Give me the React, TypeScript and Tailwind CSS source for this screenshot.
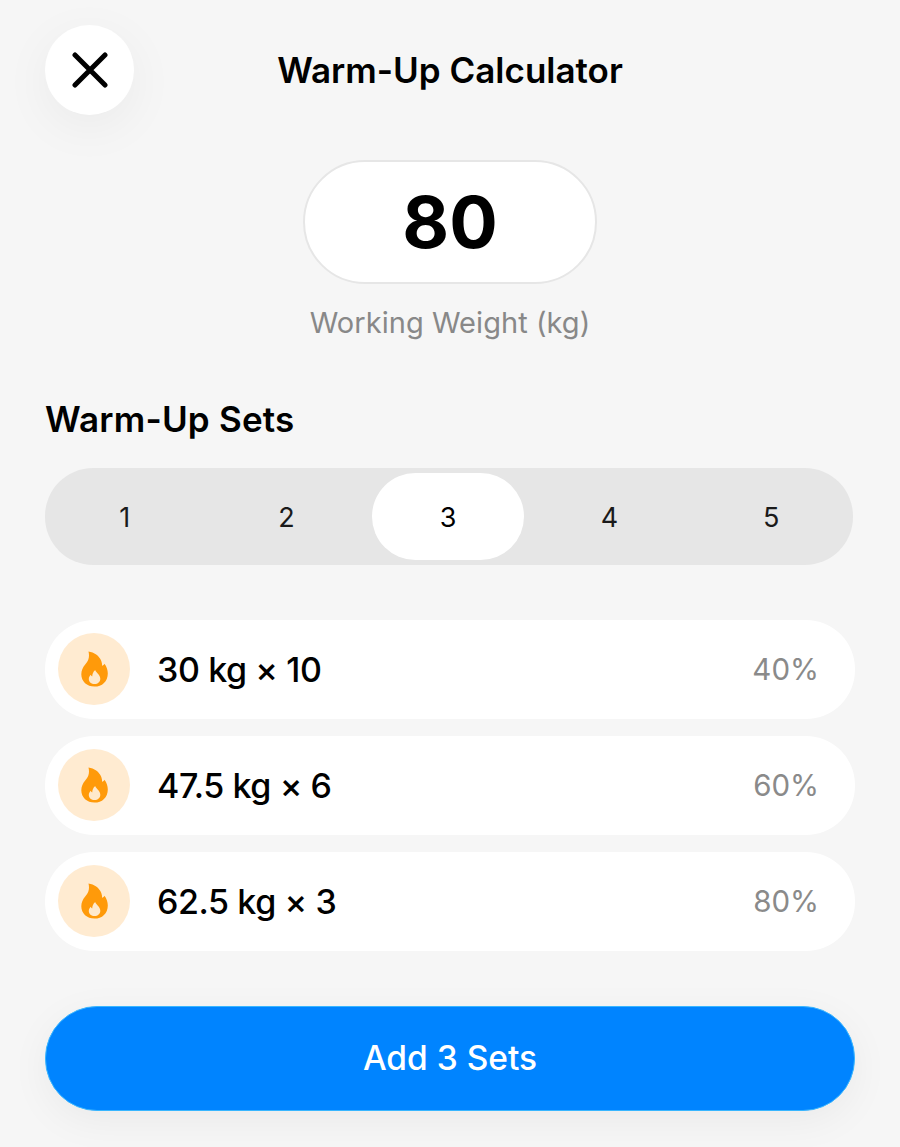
const sets = [
  { label: "30 kg × 10", pct: "40%" },
  { label: "47.5 kg × 6", pct: "60%" },
  { label: "62.5 kg × 3", pct: "80%" },
];

function Flame() {
  return (
    <svg width="27" height="36" viewBox="0 0 27 36">
      <path
        fill="#ff9a0a"
        d="M7.500 0.500C13 1.200 18.300 4.700 20.300 10c.6 1.600.9 3.200.8 4.700 1-.3 1.900-1 2.400-2 2.200 2.900 3.300 6.300 3.300 9.700 0 8-5.800 13.200-13.300 13.200S.3 30.600.3 23.300c0-3.900 1.700-7 3.900-9.700C6.900 10.300 9 6.700 7.500 0.500Z"
      />
      <path
        fill="#ffe9cc"
        d="M14.200 19c.5 2.500 5.100 4.500 5.100 8.700 0 3.200-2.500 5.300-5.700 5.300s-5.800-2-5.800-5c0-1.800.8-3.200 1.900-4.300.3.800.8 1.400 1.500 1.700.2-2.500 1-4.700 3-6.400Z"
      />
    </svg>
  );
}

export default function App() {
  return (
    <div className="relative h-[1147px] w-[900px] overflow-hidden bg-[#f6f6f6] px-[45px] pt-[25px] font-['Inter',sans-serif] text-black">
      <div className="relative flex h-[89px] items-center justify-center">
        <button className="absolute left-0 top-0 flex h-[90px] w-[89px] items-center justify-center rounded-full bg-white shadow-[0_12px_50px_rgba(0,0,0,0.05)]">
          <svg width="36" height="36" viewBox="0 0 36 36" fill="none" stroke="#000" strokeWidth="5" strokeLinecap="round">
            <path d="M3 3 33 33M33 3 3 33" />
          </svg>
        </button>
        <h1 className="pt-[2px] text-[35px] font-semibold leading-[41px] tracking-[0px]">Warm-Up Calculator</h1>
      </div>

      <div className="mt-[46px] flex flex-col items-center">
        <div className="flex h-[124px] w-[294px] items-center justify-center rounded-[62px] border-2 border-[#e6e6e6] bg-white text-[72px] font-bold leading-none">
          80
        </div>
        <p className="mt-[21px] text-[29px] leading-[36px] tracking-[0.05px] text-[#888888]">Working Weight (kg)</p>
      </div>

      <h2 className="mt-[58px] text-[35px] font-semibold leading-[40px] tracking-[0.2px]">Warm-Up Sets</h2>

      <div className="mt-[29px] grid h-[97px] w-[808px] grid-cols-5 rounded-[48px] bg-[#e6e6e6] py-[5px]">
        {[1, 2, 3, 4, 5].map((n) => (
          <div key={n} className="flex pl-[3.500px] pr-[5.500px]">
            <div
              className={
                n === 3
                  ? "flex flex-1 items-center justify-center rounded-[44px] bg-white pt-[3px] text-[27px]"
                  : "flex flex-1 items-center justify-center pt-[3px] text-[27px] text-[#1a1a1a]"
              }
            >
              {n}
            </div>
          </div>
        ))}
      </div>

      <div className="mt-[55px] flex w-[810px] flex-col gap-[17.5px]">
        {sets.map((s) => (
          <div key={s.label} className="flex h-[98.500px] items-center rounded-[49px] bg-white pl-[13px] pr-[36px]">
            <div className="flex h-[72px] w-[72px] items-center justify-center rounded-full bg-[#ffebd1]">
              <Flame />
            </div>
            <span className="ml-[27px] flex-1 pt-[2px] text-[34px] font-medium leading-[44px] tracking-[-0.4px]">{s.label}</span>
            <span className="text-[29.500px] leading-[36px] text-[#8a8a8a]">{s.pct}</span>
          </div>
        ))}
      </div>

      <button className="mt-[55.500px] flex h-[105px] w-[810px] items-center justify-center rounded-[52px] border-[1.5px] border-[#38b6ff] bg-[#0084ff] text-[33.500px] font-medium text-white shadow-[0_10px_40px_rgba(0,0,0,0.05)]">
        Add 3 Sets
      </button>
    </div>
  );
}
